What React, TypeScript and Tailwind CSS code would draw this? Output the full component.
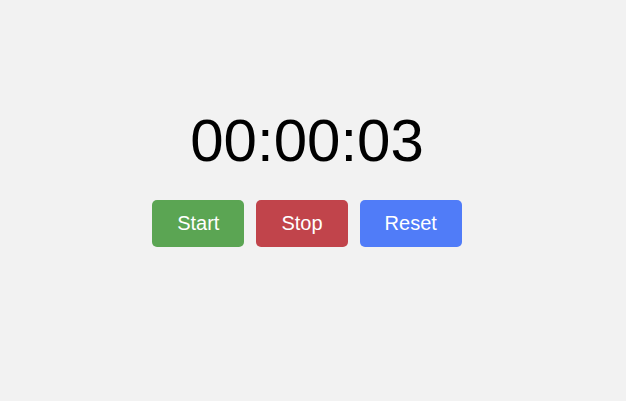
import React, { useState } from "react";

function pad(n: number) {
    return n < 10 ? `0${n}` : `${n}`;
}

export default function App() {
    const [seconds, setSeconds] = useState(3);

    const h = Math.floor(seconds / 3600);
    const m = Math.floor((seconds % 3600) / 60);
    const s = seconds % 60;

    return (
        <div className="min-h-screen w-full bg-[#f2f2f2] font-['Liberation_Sans',Arial,sans-serif] text-black">
            <div className="flex flex-col items-center pt-[107px] pr-3">
                <div className="text-[60px] leading-[67px]">
                    {pad(h)}:{pad(m)}:{pad(s)}
                </div>
                <div className="mt-[26px] flex gap-3">
                    <button className="rounded-[5px] bg-[#5ba553] px-[25px] py-3 text-[20px] leading-[23px] text-white">
                        Start
                    </button>
                    <button className="rounded-[5px] bg-[#c1444b] px-[25px] py-3 text-[20px] leading-[23px] text-white">
                        Stop
                    </button>
                    <button
                        onClick={() => setSeconds(0)}
                        className="rounded-[5px] bg-[#507cf8] px-[25px] py-3 text-[20px] leading-[23px] text-white"
                    >
                        Reset
                    </button>
                </div>
            </div>
        </div>
    );
}
